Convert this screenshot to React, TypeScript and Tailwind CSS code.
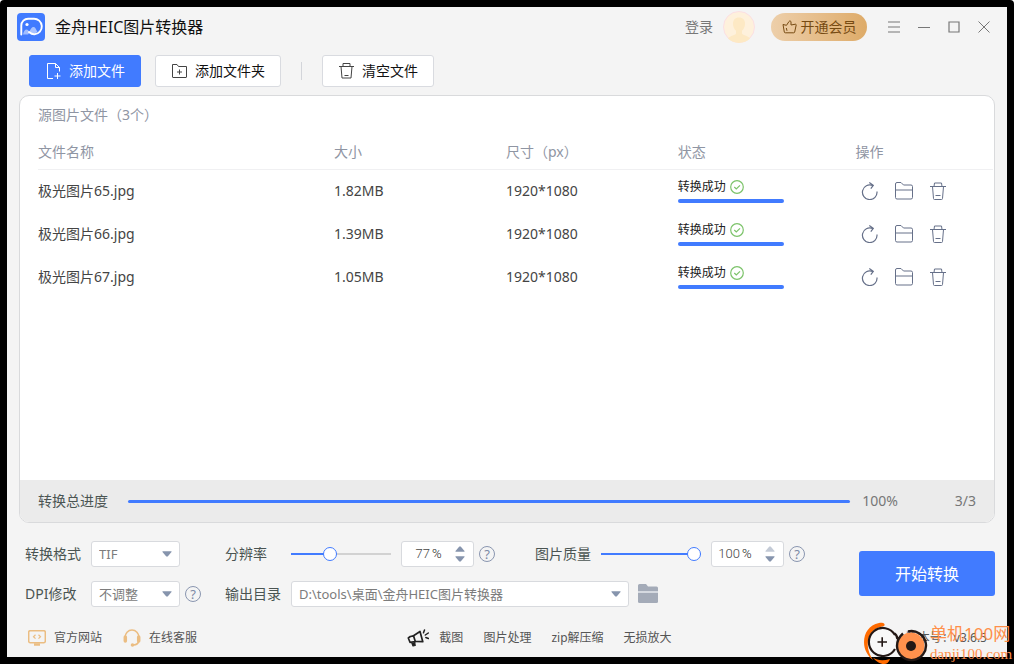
import { useState, type ReactNode } from 'react'

interface ImageFile {
  name: string
  size: string
  dimensions: string
}

const FILES: ImageFile[] = [
  { name: '极光图片65.jpg', size: '1.82MB', dimensions: '1920*1080' },
  { name: '极光图片66.jpg', size: '1.39MB', dimensions: '1920*1080' },
  { name: '极光图片67.jpg', size: '1.05MB', dimensions: '1920*1080' },
]

function Logo() {
  return (
    <svg viewBox="0 0 28 28" className="size-7" aria-hidden="true">
      <rect width="28" height="28" rx="4" fill="#417bff" />
      <path
        d="M4.300 21.500V12.500a6.800 6.800 0 0 1 7-6.800h5.200a7.800 7.800 0 0 1 1 15.600c-2.500.2-4-1-5.500-2.300"
        fill="none"
        stroke="#fff"
        strokeWidth="1.900"
        strokeLinecap="round"
      />
      <circle cx="10" cy="11.500" r="1.600" fill="#fff" />
      <path d="M6 21.500c.8-3.500 2-5 3.500-5s2.300 1.500 3.300 3L11 21.500z" fill="#fff" opacity=".5" />
      <path d="M12 19.500c1.500-3.800 3-5.800 4.800-5.500 1.800.3 2.200 3 3.600 4.500-1.600 2.500-5 2.500-8.400 1z" fill="#fff" opacity=".55" />
    </svg>
  )
}

function FileAddIcon() {
  return (
    <svg viewBox="0 0 16 16" className="size-4" fill="none" stroke="currentColor" aria-hidden="true">
      <path d="M8 15.500H2.500V.5h8l4 4v4M10.500.5v4h4M12.500 10v6M9.500 13h6" />
    </svg>
  )
}

function FolderAddIcon() {
  return (
    <svg viewBox="0 0 16 16" className="size-4" fill="none" stroke="#444" aria-hidden="true">
      <path d="M1.500 14V1.500H6l1.500 2h8V14a.5.5 0 0 1-.5.5H2a.5.5 0 0 1-.5-.5zM8.500 6.500v5M6 9h5" />
    </svg>
  )
}

function ClearIcon() {
  return (
    <svg viewBox="0 0 16 16" className="size-4" fill="none" stroke="#444" aria-hidden="true">
      <path d="M1 3.500h15M5 3.500v-3h7v3M3 3.500l1 11.500h9l1-11.500M6.500 12.500h4" />
    </svg>
  )
}

function TrashIcon() {
  return (
    <svg viewBox="0 0 18 18" className="size-[18px]" fill="none" stroke="currentColor" aria-hidden="true">
      <path d="M1 4.500h16M5 4.500l.5-3.500h7l.5 3.500M3.500 4.500l1 12a1 1 0 0 0 1 1h7a1 1 0 0 0 1-1l1-12M6.500 13.500h5" />
    </svg>
  )
}

function RefreshIcon() {
  return (
    <svg viewBox="0 0 18 18" className="size-[18px]" fill="none" stroke="currentColor" strokeWidth="1.200" aria-hidden="true">
      <path d="M16 9.500a7.300 7.300 0 1 1-4.500-6M8.300.5l4 2.800-2.500 3.400" />
    </svg>
  )
}

function FolderIcon() {
  return (
    <svg viewBox="0 0 18 18" className="size-[18px]" fill="none" stroke="currentColor" aria-hidden="true">
      <path d="M.5 15.500V2a1.500 1.500 0 0 1 1.500-1.500h4l2.500 2.500H16a1.500 1.500 0 0 1 1.500 1.500v11A1.500 1.500 0 0 1 16 17H2a1.500 1.500 0 0 1-1.500-1.500zM.5 8h17" />
    </svg>
  )
}

function CheckIcon() {
  return (
    <svg viewBox="0 0 14 14" className="size-3.5" fill="none" stroke="#7cc36a" strokeWidth="1.200" aria-hidden="true">
      <circle cx="7" cy="7" r="6.300" />
      <path d="M4.300 7l2 2L10 5.300" />
    </svg>
  )
}

function ThumbIcon() {
  return (
    <svg viewBox="0 0 15 14" className="h-3.5 w-[15px]" fill="none" stroke="currentColor" strokeLinejoin="round" aria-hidden="true">
      <path d="M1 4.500l3.500.8L7 1.500c.6-1 2-.6 2 .5v3l4.500-.8c.5 0 .8.4.7.8l-1.500 7a1 1 0 0 1-1 .8H3.300a1 1 0 0 1-1-.8zM4.300 8l.7 2.800" />
    </svg>
  )
}

function MonitorIcon() {
  return (
    <svg viewBox="0 0 18 16" className="h-4 w-[18px]" fill="none" stroke="#ebbd82" aria-hidden="true">
      <rect x=".7" y=".7" width="16.600" height="12" rx="1.500" strokeWidth="1.500" />
      <path d="M7.500 4.800L5.500 6.700l2 1.900M10.500 4.800l2 1.900-2 1.900" strokeWidth="1.200" />
      <path d="M6 14.500h6" strokeWidth="2.500" />
    </svg>
  )
}

function HeadsetIcon() {
  return (
    <svg viewBox="0 0 18 18" className="size-[18px]" fill="none" stroke="#ebbd82" aria-hidden="true">
      <path d="M2 8.500a7 7.500 0 0 1 14 0M16 11.500c-.5 2.800-2.500 4.300-5.500 4.500" strokeWidth="1.500" />
      <path d="M2.300 8v4M15.700 8v4" strokeWidth="3.500" strokeLinecap="round" />
      <circle cx="9.500" cy="16" r="1.800" fill="#ebbd82" stroke="none" />
    </svg>
  )
}

function MegaphoneIcon() {
  return (
    <svg viewBox="0 0 22 18" className="h-[18px] w-[22px]" fill="none" stroke="#222" strokeLinejoin="round" strokeLinecap="round" aria-hidden="true">
      <path d="M6.500 6.800L13 2.500l2.800 10.200-7.500-.2" strokeWidth="1.700" />
      <path d="M6.500 6.800l1.800 5.700-5.300.8L1.300 9l2-1.500z" strokeWidth="1.700" />
      <path d="M4.700 13.700L6 17l2.200-.5-.5-3.500" fill="#222" strokeWidth="1.200" />
      <path d="M16.500 3.800L17.500 1M18.300 6l3-2M18.800 8.500l2.700 1" strokeWidth="1.500" />
    </svg>
  )
}

function Triangle({ up, faded }: { up?: boolean; faded?: boolean }) {
  return (
    <svg viewBox="0 0 10 6" className={`h-1.5 w-2.5 ${faded ? 'text-[#c3cad6]' : 'text-[#8694ad]'}`} fill="currentColor" aria-hidden="true">
      <path d={up ? 'M4.300.5h1.400L9.500 5v.7H.5V5z' : 'M.5.3h9V1L5.700 5.500H4.300L.5 1z'} />
    </svg>
  )
}

function HelpButton({ label }: { label: string }) {
  return (
    <button
      aria-label={label}
      className="flex size-4 shrink-0 items-center justify-center rounded-full border border-[#8a96b0] text-[13px] leading-none text-[#7d8aa6]"
    >
      ?
    </button>
  )
}

function Dropdown({ id, options, className }: { id: string; options: string[]; className: string }) {
  return (
    <div className={`relative ${className}`}>
      <select
        id={id}
        className="h-[26px] w-full appearance-none rounded-[3px] border border-[#d8dade] bg-white pl-[7px] text-[13px] leading-6 text-[#7c7c7c] outline-none"
      >
        {options.map((option) => (
          <option key={option}>{option}</option>
        ))}
      </select>
      <span className="pointer-events-none absolute inset-y-0 right-2 flex items-center">
        <Triangle />
      </span>
    </div>
  )
}

interface PercentFieldProps {
  id: string
  label: string
  initial: number
  max: number
}

function PercentField({ id, label, initial, max }: PercentFieldProps) {
  const [value, setValue] = useState(initial)
  const fill = (value / max) * 100

  return (
    <div className="flex items-center">
      <label htmlFor={id} className="mr-2.5 text-sm">
        {label}
      </label>
      <input
        type="range"
        aria-label={`${label}滑块`}
        min={0}
        max={max}
        value={value}
        onChange={(e) => setValue(Number(e.target.value))}
        className="mr-2.5 h-3.5 w-[100px] appearance-none bg-[length:100%_2px] bg-center bg-no-repeat outline-none [&::-webkit-slider-thumb]:size-3.5 [&::-webkit-slider-thumb]:appearance-none [&::-webkit-slider-thumb]:rounded-full [&::-webkit-slider-thumb]:border [&::-webkit-slider-thumb]:border-[#417bff] [&::-webkit-slider-thumb]:bg-white"
        style={{ backgroundImage: `linear-gradient(to right, #417bff ${fill}%, #d2d2d2 ${fill}%)` }}
      />
      <div className="mr-[5px] flex h-[26px] w-[73px] items-center rounded-[3px] border border-[#d8dade] bg-white pr-2">
        <input
          id={id}
          value={value}
          onChange={(e) => setValue(Number(e.target.value) || 0)}
          className="w-7 text-right font-[Roboto] text-[13px] font-light text-[#444] outline-none"
        />
        <span className="pl-0.5 font-[Roboto] text-[13px] font-light text-[#222]">%</span>
        <span className="ml-auto flex flex-col gap-1">
          <button aria-label={`增加${label}`} onClick={() => setValue(Math.min(max, value + 1))}>
            <Triangle up faded={value >= max} />
          </button>
          <button aria-label={`减少${label}`} onClick={() => setValue(Math.max(0, value - 1))}>
            <Triangle />
          </button>
        </span>
      </div>
      <HelpButton label={`${label}说明`} />
    </div>
  )
}

function ToolButton({ icon, children, primary }: { icon: ReactNode; children: ReactNode; primary?: boolean }) {
  return (
    <button
      className={`flex h-8 items-center gap-2 rounded-[3px] border px-[15px] text-sm ${
        primary ? 'border-[#417bff] bg-[#417bff] text-white' : 'border-[#d9dbe0] bg-white text-[#111]'
      }`}
    >
      {icon}
      {children}
    </button>
  )
}

function TitleBar() {
  return (
    <header className="flex h-10 items-center pr-2 pl-2.5">
      <Logo />
      <h1 className="ml-2.5 text-base text-[#111]">金舟HEIC图片转换器</h1>
      <a href="#login" className="ml-auto text-sm text-[#777]">
        登录
      </a>
      <svg viewBox="0 0 32 32" className="ml-2.5 size-8" aria-hidden="true">
        <circle cx="16" cy="16" r="15.500" fill="#fef1dc" stroke="#fbdfe3" />
        <path d="M16 6.500c4 0 6 2.500 6 6.200 0 3-1.300 5.600-3 7v2.500c0 2 6 2.300 8 5.300a16 16 0 0 1-22 0c2-3 8-3.300 8-5.300v-2.500c-1.700-1.400-3-4-3-7 0-3.700 2-6.200 6-6.200z" fill="#fde9c4" />
      </svg>
      <button className="ml-4 flex h-7 w-24 items-center justify-center gap-1 rounded-full bg-gradient-to-r from-[#edcfaa] to-[#deab68] text-sm text-[#774b12]">
        <ThumbIcon />
        开通会员
      </button>
      <div className="ml-3 flex text-[#777]">
        <button aria-label="菜单" className="flex h-7 w-[30px] items-center justify-center">
          <svg viewBox="0 0 12 12" className="size-3" stroke="currentColor">
            <path d="M0 1h12M0 6h12M0 11h12" strokeWidth="1.200" />
          </svg>
        </button>
        <button aria-label="最小化" className="flex h-7 w-[30px] items-center justify-center">
          <svg viewBox="0 0 12 12" className="size-3" stroke="currentColor">
            <path d="M0 6.500h12" />
          </svg>
        </button>
        <button aria-label="最大化" className="flex h-7 w-[30px] items-center justify-center">
          <svg viewBox="0 0 12 12" className="size-3" fill="none" stroke="currentColor">
            <path d="M1 1h10v10H1z" strokeWidth="1.200" />
          </svg>
        </button>
        <button aria-label="关闭" className="flex h-7 w-[30px] items-center justify-center">
          <svg viewBox="0 0 12 12" className="size-3" stroke="currentColor">
            <path d="M.5.5l11 11M11.500.5l-11 11" />
          </svg>
        </button>
      </div>
    </header>
  )
}

function FileTable() {
  return (
    <table className="w-full table-fixed text-left text-sm text-[#444]">
      <colgroup>
        <col className="w-[31%]" />
        <col className="w-[18%]" />
        <col className="w-[18%]" />
        <col className="w-[18.6%]" />
        <col />
      </colgroup>
      <thead>
        <tr className="h-[33px] border-b border-[#f0f0f2] text-[#8f95a3]">
          <th className="font-normal">文件名称</th>
          <th className="font-normal">大小</th>
          <th className="font-normal">尺寸（px）</th>
          <th className="font-normal">状态</th>
          <th className="font-normal">操作</th>
        </tr>
      </thead>
      <tbody>
        {FILES.map((file) => (
          <tr key={file.name} className="h-[43px]">
            <td>{file.name}</td>
            <td>{file.size}</td>
            <td>{file.dimensions}</td>
            <td>
              <div className="flex items-center gap-1 text-xs text-[#222]">
                转换成功
                <CheckIcon />
              </div>
              <div className="mt-1 h-1 w-[106px] rounded-full bg-[#417bff]" />
            </td>
            <td>
              <div className="flex items-center gap-4 pl-1.5 text-[#667089]">
                <button aria-label="重新转换">
                  <RefreshIcon />
                </button>
                <button aria-label="打开文件夹">
                  <FolderIcon />
                </button>
                <button aria-label="删除">
                  <TrashIcon />
                </button>
              </div>
            </td>
          </tr>
        ))}
      </tbody>
    </table>
  )
}

function SiteBadge() {
  return (
    <div className="pointer-events-none absolute right-1 bottom-0 flex items-end gap-0.5 text-[#ff8f4a]">
      <svg viewBox="0 0 64 42" className="h-[42px] w-16" fill="none" aria-hidden="true">
        <path d="M20 4C22 2 19 0 15 1 5 3 0 11 0 20c0 8 4 14 9 18C3 29 1 17 9 9c3-3 7-4 11-5z" fill="#ff6b00" />
        <path d="M9 35.500c4 3 10 3.500 17 1.500-1 3-3 5-6 5-4 0-8-2.500-11-6.500z" fill="#ff6b00" />
        <path d="M31 13A14 14 0 1 0 31 27" fill="#f8f8f8" stroke="#231815" strokeWidth="2.200" />
        <path d="M13.500 20h9.500M18.200 15.200v9.600" stroke="#231815" strokeWidth="1.600" />
        <circle cx="47" cy="24" r="13.500" fill="#ff914d" />
        <path d="M30.500 11.500c2 1 2.500 3 3 5.500M44 9.500A14.500 14.500 0 1 1 33 24c0-5 2-9 6-12.500" stroke="#231815" strokeWidth="2.400" />
        <circle cx="47" cy="24" r="5" fill="#231815" />
      </svg>
      <div className="w-20 whitespace-nowrap">
        <div className="text-[17px] leading-5">单机100网</div>
        <div className="font-['Liberation_Serif',serif] text-[15px] leading-5">danji100.com</div>
      </div>
    </div>
  )
}

export default function App() {
  return (
    <div className="relative flex min-h-screen flex-col rounded-t-[4px] bg-black p-[7px] font-['Noto_Sans','Noto_Sans_CJK_SC',sans-serif] text-[#4a5452]">
      <main className="flex flex-1 flex-col bg-[#f4f4f4]">
        <TitleBar />

        <div className="flex h-12 items-center px-[22px]">
          <ToolButton primary icon={<FileAddIcon />}>
            添加文件
          </ToolButton>
          <div className="ml-3.5">
            <ToolButton icon={<FolderAddIcon />}>添加文件夹</ToolButton>
          </div>
          <div className="mx-5 h-[18px] w-px bg-[#d3d5da]" />
          <ToolButton icon={<ClearIcon />}>清空文件</ToolButton>
        </div>

        <section className="mx-3 flex flex-1 flex-col overflow-hidden rounded-[10px] border border-[#d9dadc] bg-white">
          <h2 className="mb-0.5 flex h-[38px] items-center px-[18px] text-sm text-[#8f95a3]">源图片文件（3个）</h2>
          <div className="flex-1 pr-px pl-[18px]">
            <FileTable />
          </div>
          <div className="flex h-[42px] items-center bg-[#ebebeb] px-[18px] text-sm">
            <span>转换总进度</span>
            <div className="mr-3 ml-5 h-[3px] flex-1 rounded-full bg-[#417bff]" />
            <span className="text-[#777]">100%</span>
            <span className="w-[78px] text-right text-[#777]">3/3</span>
          </div>
        </section>

        <div className="flex items-start justify-between pt-[18px] pr-3 pl-[18px]">
          <div className="flex flex-col gap-3.5 text-sm">
            <div className="flex items-center">
              <label htmlFor="format" className="w-[66px]">
                转换格式
              </label>
              <Dropdown id="format" options={['TIF', 'JPG', 'PNG']} className="mr-[45px] w-[89px]" />
              <div className="flex gap-10">
                <div className="w-[270px] [&_label]:w-14">
                  <PercentField id="resolution" label="分辨率" initial={77} max={204} />
                </div>
                <PercentField id="quality" label="图片质量" initial={100} max={100} />
              </div>
            </div>
            <div className="flex items-center">
              <label htmlFor="dpi" className="w-[66px]">
                DPI修改
              </label>
              <Dropdown id="dpi" options={['不调整', '72', '300']} className="mr-[5px] w-[89px]" />
              <HelpButton label="DPI说明" />
              <label htmlFor="output" className="mr-2.5 ml-6">
                输出目录
              </label>
              <Dropdown id="output" options={['D:\\tools\\桌面\\金舟HEIC图片转换器']} className="w-[338px]" />
              <button aria-label="打开输出目录" className="ml-[9px]">
                <svg viewBox="0 0 20 20" className="size-5" fill="#a4abb8">
                  <path d="M0 7V1.500A1.500 1.500 0 0 1 1.500 0H8l2 2.500h8.500A1.500 1.500 0 0 1 20 4v3z" />
                  <path d="M0 9h20v8.500a1.500 1.500 0 0 1-1.500 1.500h-17A1.500 1.500 0 0 1 0 17.500z" />
                  <path d="M0 7h20v2H0z" fill="#d5d9e0" />
                </svg>
              </button>
            </div>
          </div>
          <button className="mt-2.5 h-[45px] w-[136px] rounded-[3px] bg-[#417bff] text-base text-white">开始转换</button>
        </div>

        <footer className="mt-3 flex h-[38px] items-center pr-5 pl-[21px] text-xs text-[#555]">
          <a href="#site" className="flex items-center gap-2">
            <MonitorIcon />
            官方网站
          </a>
          <a href="#support" className="ml-[21px] flex items-center gap-2">
            <HeadsetIcon />
            在线客服
          </a>
          <nav className="mx-auto flex items-center gap-5 pr-6">
            <a href="#capture" className="flex items-center gap-2.5">
              <MegaphoneIcon />
              截图
            </a>
            <a href="#edit">图片处理</a>
            <a href="#zip">zip解压缩</a>
            <a href="#enlarge">无损放大</a>
          </nav>
          <span>版本号：v3.6.5</span>
        </footer>
      </main>
      <SiteBadge />
    </div>
  )
}
